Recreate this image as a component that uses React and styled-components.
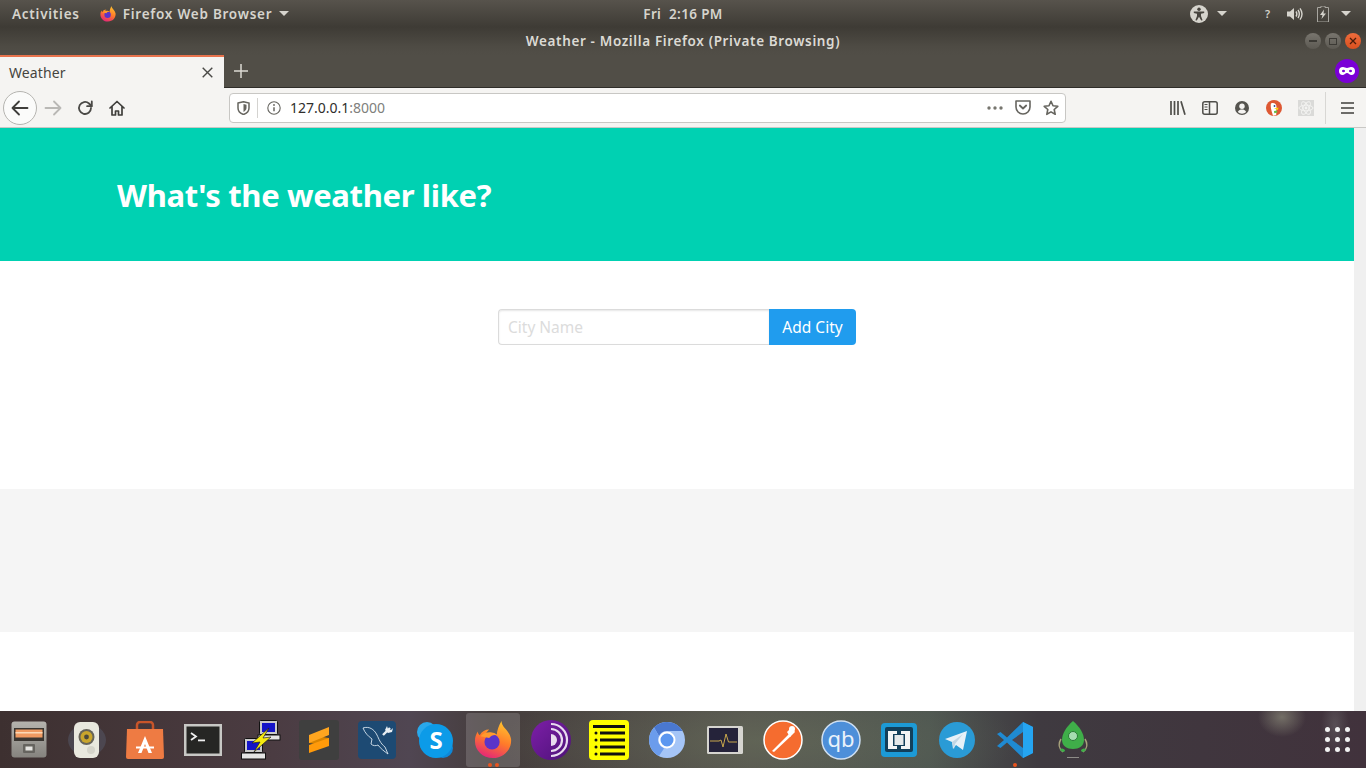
import React from "react";
import styled, { createGlobalStyle } from "styled-components";

const GlobalStyle = createGlobalStyle`
  html, body {
    margin: 0;
    padding: 0;
    height: 768px;
    overflow: hidden;
    background: #fff;
    font-family: "Noto Sans", "Open Sans", sans-serif;
  }
  * { box-sizing: border-box; }
`;

const Screen = styled.div`
  width: 1366px;
  height: 768px;
  display: flex;
  flex-direction: column;
  overflow: hidden;
`;

/* ---------- gnome top bar ---------- */

const TopBar = styled.div`
  height: 27px;
  display: grid;
  grid-template-columns: 1fr auto 1fr;
  align-items: center;
  background: linear-gradient(#57534c, #3e3b35);
  color: #d6d4cd;
  font-size: 13.5px;
  font-weight: 600;
  letter-spacing: 0.75px;
`;

const TopLeft = styled.div`
  display: flex;
  align-items: center;
  padding-left: 12px;
`;

const AppMenu = styled.div`
  display: flex;
  align-items: center;
  gap: 7px;
  margin-left: 20px;
`;

const Clock = styled.div`
  white-space: pre;
  letter-spacing: 0.35px;
`;

const TopRight = styled.div`
  display: flex;
  align-items: center;
  justify-content: flex-end;
  height: 27px;
`;

const TrayItem = styled.span`
  display: flex;
  align-items: center;
  justify-content: center;
  width: ${(p) => p.$w}px;
  margin-right: ${(p) => p.$mr || 0}px;
  font-size: ${(p) => p.$fs || 13}px;
`;

const Caret = styled.span`
  width: 0;
  height: 0;
  border-left: 5px solid transparent;
  border-right: 5px solid transparent;
  border-top: 5px solid #d6d4cd;
`;

/* ---------- window title bar ---------- */

const TitleBar = styled.div`
  height: 28px;
  display: grid;
  grid-template-columns: 1fr auto 1fr;
  align-items: center;
  background: linear-gradient(#3e3b35, #4e4b44 70%, #514e47);
  color: #dcdad4;
  font-size: 13.5px;
  font-weight: 600;
  letter-spacing: 0.63px;
`;

const WindowButtons = styled.div`
  grid-column: 3;
  display: flex;
  justify-content: flex-end;
  gap: 4px;
  padding-right: 5px;
`;

const WindowButton = styled.span`
  width: 16px;
  height: 16px;
  border-radius: 50%;
  display: flex;
  align-items: center;
  justify-content: center;
  background: ${(p) =>
    p.$close
      ? "linear-gradient(#ee6c3c, #d9501f)"
      : "linear-gradient(#78756e, #5c5952)"};
`;

/* ---------- tab strip ---------- */

const TabStrip = styled.div`
  height: 33px;
  display: flex;
  align-items: stretch;
  background: #514e47;
  border-bottom: 1px solid #2f2d29;
`;

const Tab = styled.div`
  width: 224px;
  height: 33px;
  display: flex;
  align-items: center;
  justify-content: space-between;
  padding: 0 11px 1px 9px;
  background: #f5f4f2;
  border-top: 2px solid #e8734d;
  color: #46443f;
  font-size: 14px;
  letter-spacing: 0.1px;
`;

const NewTab = styled.div`
  width: 34px;
  display: flex;
  align-items: center;
  justify-content: center;
`;

const PrivateBadge = styled.div`
  margin-left: auto;
  margin-right: 7px;
  align-self: center;
  width: 24px;
  height: 24px;
  border-radius: 50%;
  background: #7a00d6;
  display: flex;
  align-items: center;
  justify-content: center;
`;

/* ---------- nav bar ---------- */

const NavBar = styled.div`
  height: 40px;
  display: flex;
  align-items: center;
  background: #f5f4f2;
  border-bottom: 1px solid #c9c8c5;
`;

const BackButton = styled.div`
  width: 34px;
  height: 34px;
  margin-left: 3px;
  border: 1px solid #b5b4b0;
  border-radius: 50%;
  background: #fbfbfa;
  display: flex;
  align-items: center;
  justify-content: center;
`;

const NavSlot = styled.div`
  width: 32px;
  display: flex;
  align-items: center;
  justify-content: center;
  flex: none;
`;

const UrlBar = styled.div`
  width: 837px;
  height: 30px;
  margin-left: 96px;
  display: flex;
  align-items: center;
  background: #fff;
  border: 1px solid #c8c7c4;
  border-radius: 4px;
`;

const UrlIdentity = styled.div`
  display: flex;
  align-items: center;
  justify-content: center;
  width: 28px;
  height: 20px;
  border-right: 1px solid #d4d3d0;
`;

const UrlInfo = styled.div`
  width: 32px;
  display: flex;
  justify-content: center;
`;

const UrlText = styled.div`
  flex: 1;
  font-size: 14px;
  color: #2f2e2c;
  span {
    color: #80807c;
  }
`;

const UrlAction = styled.div`
  width: 28px;
  display: flex;
  justify-content: center;
`;

const Toolbar = styled.div`
  display: flex;
  align-items: center;
  margin-left: 96px;
`;

const ToolbarDivider = styled.div`
  width: 1px;
  height: 32px;
  margin: 0 5px 0 3px;
  background: #d8d7d4;
`;

/* ---------- page ---------- */

const Viewport = styled.div`
  flex: 1;
  display: flex;
  min-height: 0;
`;

const Page = styled.div`
  flex: 1;
  display: flex;
  flex-direction: column;
  background: #fff;
`;

const Scrollbar = styled.div`
  width: 12px;
  background: #f0f0f0;
`;

const Hero = styled.section`
  height: 133px;
  display: flex;
  align-items: center;
  padding: 3px 117px 0;
  background: #00d1b2;
`;

const Title = styled.h1`
  margin: 0;
  color: #fff;
  font-size: 31px;
  font-weight: 700;
  line-height: 1.2;
  letter-spacing: -0.35px;
`;

const FormSection = styled.section`
  height: 228px;
  padding-top: 48px;
  display: flex;
  justify-content: center;
`;

const CityForm = styled.form`
  display: flex;
  height: 36px;
`;

const CityInput = styled.input`
  width: 271px;
  height: 36px;
  padding: 0 9px;
  border: 1px solid #dbdbdb;
  border-right: none;
  border-radius: 4px 0 0 4px;
  outline: none;
  font-family: inherit;
  font-size: 15.5px;
  box-shadow: inset 0 1px 2px rgba(10, 10, 10, 0.1);
  &::placeholder {
    color: #dcdcdc;
    opacity: 1;
  }
`;

const AddButton = styled.button`
  width: 87px;
  height: 36px;
  padding: 0;
  border: none;
  border-radius: 0 4px 4px 0;
  background: #209cee;
  color: #fff;
  font-family: inherit;
  font-size: 15.5px;
`;

const EmptySection = styled.section`
  height: 143px;
  background: #f5f5f5;
`;

/* ---------- dock ---------- */

const Dock = styled.div`
  height: 57px;
  flex: none;
  display: flex;
  align-items: center;
  padding-left: 2px;
  gap: 4px;
  background:
    radial-gradient(ellipse 24px 20px at 1282px 6px, rgba(150, 150, 130, 0.6), transparent),
    radial-gradient(ellipse 14px 30px at 1335px 14px, rgba(130, 130, 130, 0.35), transparent),
    radial-gradient(ellipse 260px 60px at 760px 30px, rgba(110, 120, 95, 0.45), transparent),
    linear-gradient(90deg, #3d3030, #4b3c42 20%, #504652 30%, #453d3c 36%, #55534e 55%, #4e5651 68%, #3f3a40 76%, #41323c 100%);
`;

const DockItem = styled.div`
  position: relative;
  width: 54px;
  height: 54px;
  flex: none;
  display: flex;
  align-items: center;
  justify-content: center;
  border-radius: 3px;
  background: ${(p) => (p.$active ? "rgba(255,255,255,0.16)" : "transparent")};
`;

const RunDots = styled.div`
  position: absolute;
  bottom: 0;
  left: 0;
  right: 0;
  display: flex;
  justify-content: center;
  gap: 3px;
  i {
    width: 4px;
    height: 4px;
    border-radius: 50%;
    background: #e9541f;
  }
`;

const AppGrid = styled.div`
  margin-left: auto;
  margin-right: 16px;
  display: grid;
  grid-template-columns: repeat(3, 5px);
  gap: 5px;
  i {
    width: 5px;
    height: 5px;
    border-radius: 50%;
    background: #f2f2f2;
  }
`;

/* ---------- icons ---------- */

const FirefoxIcon = ({ size = 16 }) => (
  <svg width={size} height={size} viewBox="0 0 40 40">
    <defs>
      <linearGradient id={`ffa${size}`} x1="0.7" y1="0" x2="0.3" y2="1">
        <stop offset="0" stopColor="#ffc22e" />
        <stop offset="0.5" stopColor="#ff7a2a" />
        <stop offset="1" stopColor="#e3247a" />
      </linearGradient>
    </defs>
    <path
      d="M29 0c0 7 8 9 10 19 1 11-8 20-19 20S1 31 1 21c0-4 1-7 3-10 0 2 1 3 2 4 2-4 6-6 10-6-2 2-3 3-3 4 4-1 8-1 11 2 0-5 2-10 5-15z"
      fill={`url(#ffa${size})`}
    />
    <circle cx="19" cy="22" r="8" fill="#5b34c9" />
    <path d="M7 16c4-5 13-6 18-1-4-1-7 0-9 3l-9-2z" fill="#ff9a2c" />
  </svg>
);

const Accessibility = () => (
  <svg width="18" height="18" viewBox="0 0 18 18">
    <circle cx="9" cy="9" r="9" fill="#d6d4cd" />
    <circle cx="9" cy="4.3" r="1.7" fill="#47443e" />
    <path d="M3.8 6.5 L14.2 6.5 L14.2 7.9 L11 8.7 L11 11 L12.6 15.2 L11.2 15.6 L9 11.8 L6.8 15.6 L5.4 15.2 L7 11 L7 8.7 L3.8 7.9 Z" fill="#47443e" />
  </svg>
);

const Speaker = () => (
  <svg width="16" height="14" viewBox="0 0 16 14" fill="none" stroke="#d6d4cd">
    <path d="M0 4.5h3L7 1v12L3 9.5H0z" fill="#d6d4cd" stroke="none" />
    <path d="M9 4.5c1 1.5 1 3.5 0 5M11 3c1.6 2.4 1.6 5.6 0 8M13 1.3c2.4 3.4 2.4 8 0 11.400" strokeWidth="1.4" />
  </svg>
);

const Battery = () => (
  <svg width="12" height="16" viewBox="0 0 12 16">
    <path d="M4 0h4v1.500h3.500V16H.5V1.500H4z" fill="none" stroke="#a8a6a0" strokeWidth="1" />
    <path d="M7 3.500 3 9h2.500L4.500 13 9 7.500H6.500z" fill="#d6d4cd" />
  </svg>
);

const stroke = { fill: "none", strokeLinecap: "round", strokeLinejoin: "round" };

const BackIcon = () => (
  <svg width="18" height="16" viewBox="0 0 18 16" {...stroke} stroke="#3f3e3b" strokeWidth="1.8">
    <path d="M1.500 8h15M8 1.500 1.500 8 8 14.500" />
  </svg>
);
const ForwardIcon = () => (
  <svg width="18" height="16" viewBox="0 0 18 16" {...stroke} stroke="#b9b8b5" strokeWidth="1.8">
    <path d="M1.500 8h15M10 1.500 16.500 8 10 14.500" />
  </svg>
);
const ReloadIcon = () => (
  <svg width="16" height="16" viewBox="0 0 16 16" {...stroke} stroke="#4a4946" strokeWidth="1.8">
    <path d="M14 8a6 6 0 1 1-2-4.500L14.500 6" />
    <path d="M14.800 1.500v4.700h-4.700" />
  </svg>
);
const HomeIcon = () => (
  <svg width="16" height="16" viewBox="0 0 16 16" {...stroke} stroke="#3f3e3b" strokeWidth="1.7">
    <path d="M1 8 8 1.500 15 8M3 6.500V15h3.500v-4h3v4H13V6.500" />
  </svg>
);
const ShieldIcon = () => (
  <svg width="13" height="14" viewBox="0 0 13 14">
    <path d="M1 2 6.500.7 12 2v5c0 3-2.500 5.500-5.500 6.500C3.500 12.500 1 10 1 7z" fill="none" stroke="#66655f" strokeWidth="1.5" />
    <path d="M6.500 3 9.500 3.800V7c0 1.800-1.500 3.200-3 3.900z" fill="#66655f" />
  </svg>
);
const InfoIcon = () => (
  <svg width="14" height="14" viewBox="0 0 14 14" fill="none" stroke="#66655f">
    <circle cx="7" cy="7" r="6.2" strokeWidth="1.1" />
    <path d="M7 6.200v4" strokeWidth="1.5" />
    <circle cx="7" cy="4" r="0.9" fill="#66655f" stroke="none" />
  </svg>
);
const DotsIcon = () => (
  <svg width="16" height="4" viewBox="0 0 16 4" fill="#77766f">
    <circle cx="2" cy="2" r="1.7" />
    <circle cx="8" cy="2" r="1.7" />
    <circle cx="14" cy="2" r="1.7" />
  </svg>
);
const PocketIcon = () => (
  <svg width="16" height="15" viewBox="0 0 16 15" {...stroke} stroke="#66655f" strokeWidth="1.6">
    <path d="M1 1h14v6a7 7 0 0 1-14 0z" />
    <path d="M4.800 5.500 8 8.500l3.200-3" strokeWidth="1.8" />
  </svg>
);
const StarIcon = () => (
  <svg width="16" height="16" viewBox="0 0 16 16" {...stroke} stroke="#66655f" strokeWidth="1.6">
    <path d="M8 1.300 10 5.800l4.800.5-3.600 3.200 1 4.800L8 11.900l-4.200 2.400 1-4.800L1.200 6.300 6 5.800z" />
  </svg>
);
const LibraryIcon = () => (
  <svg width="16" height="14" viewBox="0 0 16 14" stroke="#4f4e4a" strokeWidth="1.7" fill="none">
    <path d="M1 0v14M4.500 0v14M8 0v14M11 .3l4 13.400" />
  </svg>
);
const SidebarIcon = () => (
  <svg width="16" height="14" viewBox="0 0 16 14" fill="none" stroke="#4f4e4a" strokeWidth="1.5">
    <rect x="0.8" y="0.8" width="14.4" height="12.4" rx="2" />
    <path d="M7.500 1v12" />
    <path d="M2.500 3.500h3M2.500 6h3M2.500 8.500h3" strokeWidth="1" />
  </svg>
);
const AccountIcon = () => (
  <svg width="14" height="14" viewBox="0 0 14 14">
    <circle cx="7" cy="7" r="7" fill="#55544f" />
    <circle cx="7" cy="5.3" r="2.7" fill="#f5f4f2" />
    <path d="M2.800 11c1-2 2.500-2.500 4.200-2.500s3.200.5 4.200 2.500A6 6 0 0 1 7 12.700 6 6 0 0 1 2.800 11z" fill="#f5f4f2" />
  </svg>
);
const DuckIcon = () => (
  <svg width="16" height="16" viewBox="0 0 16 16">
    <circle cx="8" cy="8" r="8" fill="#de5833" />
    <path d="M5 3.500c3-1.200 5.500.5 5.500 3.500l-.3 8L7 15.800C6 12 4 7 5 3.500z" fill="#fff" />
    <circle cx="8.500" cy="6" r="0.9" fill="#2d4f8e" />
    <path d="M8 8.500l4.500-1-.5 2.500z" fill="#fdd20a" />
    <path d="M8 11l3-.5.300 2-3 .8z" fill="#65bc46" />
  </svg>
);
const ReactIcon = () => (
  <svg width="16" height="16" viewBox="0 0 16 16" fill="none" stroke="#f4f4f2" strokeWidth="0.9">
    <rect width="16" height="16" fill="#dadad8" stroke="none" />
    <ellipse cx="8" cy="8" rx="7" ry="2.8" />
    <ellipse cx="8" cy="8" rx="7" ry="2.8" transform="rotate(60 8 8)" />
    <ellipse cx="8" cy="8" rx="7" ry="2.8" transform="rotate(120 8 8)" />
    <circle cx="8" cy="8" r="1.4" fill="#f4f4f2" stroke="none" />
  </svg>
);
const MenuIcon = () => (
  <svg width="13" height="12" viewBox="0 0 13 12" stroke="#3f3e3b" strokeWidth="1.7">
    <path d="M0 1h13M0 6h13M0 11h13" />
  </svg>
);

/* dock artwork */

const FilesApp = () => (
  <svg width="36" height="38" viewBox="0 0 36 38">
    <defs>
      <linearGradient id="cab" x1="0" y1="0" x2="0" y2="1">
        <stop offset="0" stopColor="#b5b3ae" />
        <stop offset="1" stopColor="#85837e" />
      </linearGradient>
    </defs>
    <rect x="0.5" y="0.5" width="35" height="36" rx="3" fill="url(#cab)" />
    <rect x="3" y="7" width="30" height="13" fill="#3a3632" />
    <rect x="4.5" y="8.5" width="27" height="8" fill="#ef9a62" />
    <rect x="4.5" y="11" width="27" height="1.5" fill="#fbd9b8" />
    <rect x="12" y="23" width="12" height="9" rx="1" fill="#66645f" />
    <rect x="14.5" y="25.5" width="7" height="4" fill="#e6e5e2" />
  </svg>
);
const SpeakerApp = () => (
  <svg width="40" height="38" viewBox="0 0 40 38">
    <ellipse cx="20" cy="19" rx="19" ry="16" fill="#5f6a80" opacity="0.35" />
    <rect x="7" y="1" width="25" height="36" rx="6" fill="#e9e8de" />
    <circle cx="19.5" cy="16" r="8" fill="#67645a" />
    <circle cx="19.5" cy="16" r="6" fill="#c9a52c" />
    <circle cx="19.5" cy="16" r="2.4" fill="#4b483c" />
    <circle cx="24" cy="29" r="4" fill="#d5d4ca" />
  </svg>
);
const SoftwareApp = () => (
  <svg width="38" height="38" viewBox="0 0 38 38">
    <path d="M11 8V4a3 3 0 0 1 3-3h10a3 3 0 0 1 3 3v4" fill="none" stroke="#c8552a" strokeWidth="2.5" />
    <path d="M1 8h36l1 28a2 2 0 0 1-2 2H2a2 2 0 0 1-2-2z" fill="#ee7b43" />
    <path d="M19 15 26 32h-3.500l-3.500-9-3.500 9H12z" fill="#fff" />
    <rect x="10" y="25.5" width="18" height="2" fill="#fff" />
  </svg>
);
const TerminalApp = () => (
  <svg width="38" height="32" viewBox="0 0 38 32">
    <rect width="38" height="32" fill="#c8c8c5" />
    <rect x="2.5" y="2.5" width="33" height="27" fill="#262624" />
    <path d="M7 9l5 3.500-5 3.500" fill="none" stroke="#efefef" strokeWidth="1.8" />
    <rect x="14" y="15.5" width="7" height="1.8" fill="#efefef" />
  </svg>
);
const PuttyApp = () => (
  <svg width="40" height="40" viewBox="0 0 40 40">
    <rect x="18.5" y="0.5" width="18" height="14" rx="1" fill="#c9c9c9" stroke="#111" />
    <rect x="21" y="3" width="13" height="9" fill="#1414c8" />
    <rect x="17" y="15" width="22" height="5" fill="#e4e4e4" stroke="#111" />
    <rect x="3.500" y="18.500" width="18" height="14" rx="1" fill="#c9c9c9" stroke="#111" />
    <rect x="6" y="21" width="13" height="9" fill="#1414c8" />
    <rect x="0.500" y="33" width="24" height="6" fill="#e4e4e4" stroke="#111" />
    <path d="M28 8 11 23l8-1-6 10 17-15-8 1z" fill="#f7ea10" stroke="#222" strokeWidth="0.7" />
  </svg>
);
const SublimeApp = () => (
  <svg width="40" height="40" viewBox="0 0 40 40">
    <rect width="40" height="40" rx="3" fill="#3f3f3f" />
    <path d="M10 15v8l20 3v-8z" fill="#d98400" />
    <path d="M10 15 30 7v8l-20 8z" fill="#ffa51f" />
    <path d="M10 25 30 18v8l-20 7z" fill="#ff9a0a" />
  </svg>
);
const WorkbenchApp = () => (
  <svg width="38" height="38" viewBox="0 0 38 38" fill="none">
    <rect width="38" height="38" rx="4" fill="#1d4a73" />
    <path d="M5 7c6-2 11 1 14 7 2 4 3 8 8 12l3 7c-4-3-7-5-10-9-2 1-5 1-7-1l1-5C10 15 7 12 5 7z" stroke="#d8e4ee" strokeWidth="0.9" />
    <path d="M25 14l7-7" stroke="#e8eef3" strokeWidth="2.4" />
    <path d="M29 5l1 3 3 1 2-2-1 4-4 1-3-3z" fill="#e8eef3" />
  </svg>
);
const SkypeApp = () => (
  <svg width="38" height="38" viewBox="0 0 38 38">
    <circle cx="11" cy="11" r="10" fill="#29a9ec" />
    <circle cx="27" cy="27" r="10" fill="#0f88d8" />
    <circle cx="20" cy="20" r="17" fill="#0c9be8" />
    <text x="20" y="28" textAnchor="middle" fontFamily="Noto Sans" fontWeight="700" fontSize="24" fill="#fff">S</text>
  </svg>
);
const TorApp = () => (
  <svg width="40" height="40" viewBox="0 0 40 40" fill="none">
    <defs>
      <linearGradient id="torbg" x1="0" y1="0" x2="1" y2="1">
        <stop offset="0" stopColor="#7d1fa8" />
        <stop offset="1" stopColor="#4d1278" />
      </linearGradient>
    </defs>
    <circle cx="20" cy="20" r="20" fill="url(#torbg)" />
    <path d="M20 14a6 6 0 0 1 0 12z" fill="#e8dcee" />
    <path d="M20 9a11 11 0 0 1 0 22M20 4a16 16 0 0 1 0 32" stroke="#e8dcee" strokeWidth="2.2" />
  </svg>
);
const ListApp = () => (
  <svg width="40" height="40" viewBox="0 0 40 40" fill="#111">
    <rect width="40" height="40" rx="4" fill="#ffff00" />
    <rect x="4" y="5" width="32" height="3" />
    {[13, 20, 27, 34].map((y) => (
      <g key={y}>
        <circle cx="7" cy={y} r="1.5" />
        <rect x="11" y={y - 1.5} width="25" height="3" />
      </g>
    ))}
  </svg>
);
const ChromiumApp = () => (
  <svg width="36" height="36" viewBox="0 0 36 36">
    <circle cx="18" cy="18" r="18" fill="#a5c5f7" />
    <path d="M18 0a18 18 0 0 1 15.600 9H18a9 9 0 0 0-8 5L5 5.500A18 18 0 0 1 18 0z" fill="#4a78cf" />
    <path d="M5 5.500 10 14a9 9 0 0 0 5 12.500L10 34A18 18 0 0 1 5 5.500z" fill="#6b9cec" />
    <circle cx="18" cy="18" r="7.5" fill="#5c97f0" stroke="#fff" strokeWidth="2" />
  </svg>
);
const MonitorApp = () => (
  <svg width="36" height="28" viewBox="0 0 36 28" fill="none">
    <rect width="36" height="28" rx="1.5" fill="#d6d5d0" />
    <rect x="2" y="2" width="29" height="24" fill="#25233a" />
    <path d="M3 15h9l2-1 2 7 3-13 2.500 8H30" stroke="#c9a84c" strokeWidth="1" />
  </svg>
);
const PostmanApp = () => (
  <svg width="40" height="40" viewBox="0 0 40 40">
    <circle cx="20" cy="20" r="19" fill="#f56c2f" stroke="#fff" strokeWidth="1.5" />
    <path d="M9 31 26 14l2 2-17 16z" fill="#fff" />
    <path d="M24 12 29 7l3 5-5 5z" fill="#fff" />
    <circle cx="29" cy="9" r="3" fill="#fff" />
  </svg>
);
const QbApp = () => (
  <svg width="40" height="40" viewBox="0 0 40 40">
    <circle cx="20" cy="20" r="19" fill="#4d8fd9" stroke="#cfe0f3" strokeWidth="1.5" />
    <text x="20" y="27" textAnchor="middle" fontFamily="Noto Sans" fontSize="22" fill="#eaf2fb">qb</text>
  </svg>
);
const VboxApp = () => (
  <svg width="36" height="34" viewBox="0 0 36 34">
    <rect width="36" height="34" rx="4" fill="#1c9ad6" />
    <rect x="4" y="4" width="28" height="25" rx="2" fill="#123f5a" />
    <path d="M7 8h9v3h-4v12h4v3H7z" fill="#f2f4f5" />
    <path d="M29 8h-9v3h4v12h-4v3h9z" fill="#f2f4f5" />
    <rect x="13.500" y="12" width="9" height="10" fill="#e4e8ea" />
  </svg>
);
const TelegramApp = () => (
  <svg width="36" height="36" viewBox="0 0 36 36">
    <circle cx="18" cy="18" r="18" fill="#2a9bd6" />
    <path d="M6 17 28 9l-4 19-7-5-3 4-1-7z" fill="#e7f1f8" />
    <path d="M13 20 24 12l-8 10-1 5z" fill="#c2d6e4" />
  </svg>
);
const VscodeApp = () => (
  <svg width="36" height="36" viewBox="0 0 36 36">
    <path d="M26 0 36 5v26l-10 5L10 20.500 3.500 26 0 24l7-6-7-6 3.500-2L10 15.500z" fill="#1f8ad2" />
    <path d="M26 0 36 5v26l-10 5z" fill="#25a5f2" />
    <path d="M26 10 15 18l11 8z" fill="#4b4550" />
  </svg>
);
const RocketApp = () => (
  <svg width="30" height="38" viewBox="0 0 30 38">
    <path d="M3 18c-3 5-2 10 2 13M27 18c3 5 2 10-2 13" fill="none" stroke="#a8a27c" strokeWidth="1.5" />
    <path d="M15 0c7 6 11 13 11 19 0 6-5 9-11 9S4 25 4 19C4 13 8 6 15 0z" fill="#3fae49" />
    <circle cx="15" cy="15" r="4.5" fill="#a6dcb0" stroke="#2a7c36" />
    <path d="M2 29c1-2 3-2 5 0 0 2-2 3-5 0zM28 29c-1-2-3-2-5 0 0 2 2 3 5 0z" fill="#3fae49" />
    <rect x="9" y="36" width="12" height="1" fill="#8d8c88" />
  </svg>
);

const dockApps = [
  { id: "files", Art: FilesApp },
  { id: "speaker", Art: SpeakerApp },
  { id: "software", Art: SoftwareApp },
  { id: "terminal", Art: TerminalApp },
  { id: "putty", Art: PuttyApp },
  { id: "sublime", Art: SublimeApp },
  { id: "workbench", Art: WorkbenchApp },
  { id: "skype", Art: SkypeApp },
  { id: "firefox", Art: () => <FirefoxIcon size={38} />, active: true, dots: 2 },
  { id: "tor", Art: TorApp },
  { id: "list", Art: ListApp },
  { id: "chromium", Art: ChromiumApp },
  { id: "monitor", Art: MonitorApp },
  { id: "postman", Art: PostmanApp },
  { id: "qb", Art: QbApp },
  { id: "vbox", Art: VboxApp },
  { id: "telegram", Art: TelegramApp },
  { id: "vscode", Art: VscodeApp, dots: 1 },
  { id: "rocket", Art: RocketApp },
];

const App = () => {
  return (
    <Screen>
      <GlobalStyle />
      <TopBar>
        <TopLeft>
          <span>Activities</span>
          <AppMenu>
            <FirefoxIcon />
            <span>Firefox Web Browser</span>
            <Caret />
          </AppMenu>
        </TopLeft>
        <Clock>Fri  2:16 PM</Clock>
        <TopRight>
          <TrayItem $w={18} $mr={9}><Accessibility /></TrayItem>
          <TrayItem $w={10} $mr={36}><Caret /></TrayItem>
          <TrayItem $w={10} $mr={14} $fs={11}>?</TrayItem>
          <TrayItem $w={16} $mr={14}><Speaker /></TrayItem>
          <TrayItem $w={12} $mr={12}><Battery /></TrayItem>
          <TrayItem $w={10} $mr={15}><Caret /></TrayItem>
        </TopRight>
      </TopBar>

      <TitleBar>
        <div />
        <div>Weather - Mozilla Firefox (Private Browsing)</div>
        <WindowButtons>
          <WindowButton>
            <svg width="8" height="2"><rect width="8" height="2" fill="#3c3a35" /></svg>
          </WindowButton>
          <WindowButton>
            <svg width="8" height="7"><rect x="0.5" y="0.5" width="7" height="6" fill="none" stroke="#3c3a35" /></svg>
          </WindowButton>
          <WindowButton $close>
            <svg width="8" height="8" stroke="#4a1c0a" strokeWidth="1.3"><path d="M1 1l6 6M7 1l-6 6" /></svg>
          </WindowButton>
        </WindowButtons>
      </TitleBar>

      <TabStrip>
        <Tab>
          <span>Weather</span>
          <svg width="11" height="11" stroke="#4a4946" strokeWidth="1.4"><path d="M.7.7l9.600 9.600M10.300.7.700 10.300" /></svg>
        </Tab>
        <NewTab>
          <svg width="14" height="14" stroke="#dcdad4" strokeWidth="1.5"><path d="M7 0v14M0 7h14" /></svg>
        </NewTab>
        <PrivateBadge>
          <svg width="16" height="8" viewBox="0 0 16 8">
            <path fillRule="evenodd" fill="#fff" d="M4 0c1.500 0 2.500 1 4 1s2.500-1 4-1c2.500 0 4 1.500 4 4 0 2.500-1.500 4-3.500 4C10.500 8 9.500 6 8 6S5.500 8 3.500 8C1.500 8 0 6.500 0 4 0 1.500 1.500 0 4 0zM4.500 2.700a1.500 1.300 0 1 0 0 2.600 1.500 1.300 0 0 0 0-2.600zM11.500 2.700a1.500 1.300 0 1 0 0 2.600 1.500 1.300 0 0 0 0-2.600z" />
          </svg>
        </PrivateBadge>
      </TabStrip>

      <NavBar>
        <BackButton><BackIcon /></BackButton>
        <NavSlot><ForwardIcon /></NavSlot>
        <NavSlot><ReloadIcon /></NavSlot>
        <NavSlot><HomeIcon /></NavSlot>
        <UrlBar>
          <UrlIdentity><ShieldIcon /></UrlIdentity>
          <UrlInfo><InfoIcon /></UrlInfo>
          <UrlText>127.0.0.1<span>:8000</span></UrlText>
          <UrlAction><DotsIcon /></UrlAction>
          <UrlAction><PocketIcon /></UrlAction>
          <UrlAction><StarIcon /></UrlAction>
        </UrlBar>
        <Toolbar>
          <NavSlot><LibraryIcon /></NavSlot>
          <NavSlot><SidebarIcon /></NavSlot>
          <NavSlot><AccountIcon /></NavSlot>
          <NavSlot><DuckIcon /></NavSlot>
          <NavSlot><ReactIcon /></NavSlot>
          <ToolbarDivider />
          <NavSlot><MenuIcon /></NavSlot>
        </Toolbar>
      </NavBar>

      <Viewport>
        <Page>
          <Hero>
            <Title>What's the weather like?</Title>
          </Hero>
          <FormSection>
            <CityForm onSubmit={(e) => e.preventDefault()}>
              <CityInput placeholder="City Name" />
              <AddButton type="button">Add City</AddButton>
            </CityForm>
          </FormSection>
          <EmptySection />
        </Page>
        <Scrollbar />
      </Viewport>

      <Dock>
        {dockApps.map(({ id, Art, active, dots }) => (
          <DockItem key={id} $active={active}>
            <Art />
            {dots && (
              <RunDots>
                {Array.from({ length: dots }, (_, i) => <i key={i} />)}
              </RunDots>
            )}
          </DockItem>
        ))}
        <AppGrid>
          {Array.from({ length: 9 }, (_, i) => <i key={i} />)}
        </AppGrid>
      </Dock>
    </Screen>
  );
};

export default App;
